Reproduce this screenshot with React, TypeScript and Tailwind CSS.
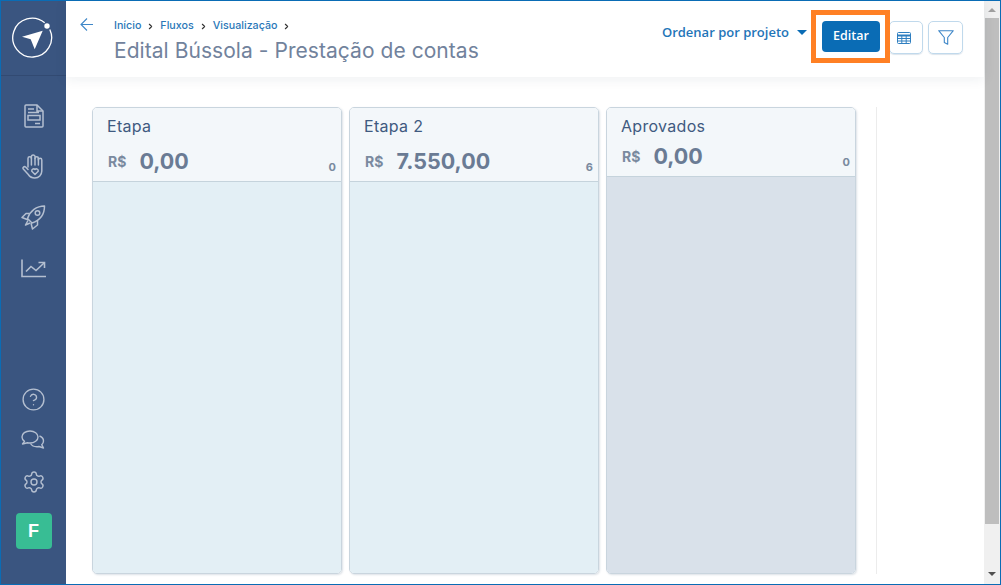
import React from 'react';
import { ChevronRight, CircleHelp, Settings } from 'lucide-react';

const heading = "font-['Inter','Noto_Sans',sans-serif]";

const columns = [
  { title: 'Etapa', total: '0,00', count: 0, body: 'bg-[#e3eff5]', headH: 'h-[74px]', totalTop: 'mt-[11px]' },
  { title: 'Etapa 2', total: '7.550,00', count: 6, body: 'bg-[#e3eff5]', headH: 'h-[74px]', totalTop: 'mt-[11px]' },
  { title: 'Aprovados', total: '0,00', count: 0, body: 'bg-[#d9e1ea]', headH: 'h-[69px]', totalTop: 'mt-[6px]' },
];

const Logo = () => (
  <svg width="42" height="42" viewBox="0 0 42 42" fill="none">
    <path d="M32.7 5.800A19.400 19.400 0 1 0 37.800 12.500" stroke="#fff" strokeWidth="1.300" />
    <circle cx="35" cy="9" r="2.700" fill="#fff" />
    <path d="M10 19.700 30.700 13.700 22.700 32.300 18.700 22.300Z" fill="#fff" />
  </svg>
);

const FormIcon = () => (
  <svg width="20" height="24" viewBox="0 0 20 24" fill="none" stroke="#b4bfd0" strokeWidth="1.500">
    <path d="M2 1h11l6 6v15a1 1 0 0 1-1 1H2a1 1 0 0 1-1-1V2a1 1 0 0 1 1-1Z" />
    <path d="M13 1v6h6M4 5h6M4 8.500h11" />
    <rect x="4" y="11.500" width="12" height="4.500" />
    <path d="M11 19.500h5" />
  </svg>
);

const HandIcon = () => (
  <svg width="23" height="25" viewBox="0 0 23 25" fill="none" stroke="#b4bfd0" strokeWidth="1.500" strokeLinejoin="round" strokeLinecap="round">
    <path d="M6 13V4.500a1.700 1.700 0 0 1 3.400 0V2.800a1.800 1.800 0 0 1 3.600 0v1.700a1.700 1.700 0 0 1 3.400 0v1.500a1.700 1.700 0 0 1 3.400 0v11c0 4-3 7-7 7-3.500 0-5-1.200-6.500-3.500L1.300 15c-1-1.500.8-3 2.300-2L6 15.500" />
    <path d="M9.400 4.500V11M13 4.500V11M16.400 4.500V11" />
    <path d="M13 20.500 9.800 17.300a1.900 1.900 0 0 1 3.200-1.800 1.900 1.900 0 0 1 3.200 1.800Z" />
  </svg>
);

const RocketIcon = () => (
  <svg width="25" height="25" viewBox="0 0 25 25" fill="none" stroke="#b4bfd0" strokeWidth="1.500" strokeLinejoin="round">
    <path d="M6.500 13.500C9 6 15.500 1 23.500 1 23.500 9.500 18.500 15.500 11 18Z" />
    <circle cx="16.500" cy="8" r="2.300" />
    <path d="M8.500 8.500H5L1 12.500l6.500 2.500" />
    <path d="M16.500 15.500V20l-5 4-1.500-6" />
    <path d="M7 15.500 4.500 20 9 18" />
  </svg>
);

const ChartIcon = () => (
  <svg width="26" height="20" viewBox="0 0 26 20" fill="none" stroke="#b4bfd0" strokeWidth="1.600">
    <path d="M1 1.500V18.500h24" />
    <path d="M5 13.500 10 8.500l5 4 8-7.500" />
    <path d="M17.500 4.500H23.500V10" />
  </svg>
);

const ChatIcon = () => (
  <svg width="25" height="19" viewBox="0 0 25 19" fill="none" stroke="#b4bfd0" strokeWidth="1.400" strokeLinejoin="round">
    <path d="M9 1C4.500 1 1 3.500 1 7c0 1.800 1 3.300 2.500 4.300L1.500 14l5-1.300c.8.2 1.600.3 2.500.3 4.500 0 8-2.600 8-6S13.500 1 9 1Z" />
    <path d="M18.500 6c2.500 1 4 2.800 4 5 0 1.500-.7 2.800-1.800 3.700L22.500 18 18 16.500c-.7.2-1.500.2-2.200.2-2.800 0-5.200-1.300-6.300-3.200" />
  </svg>
);

const TableIcon = () => (
  <svg width="14" height="12" viewBox="0 0 14 12" fill="none" stroke="#2f7fc0" strokeWidth="1">
    <rect x="0.500" y="0.500" width="13" height="11" rx="1" />
    <path d="M0.500 3.500h13" strokeWidth="2" />
    <path d="M0.500 6.500h13M0.500 9h13M4.800 3v8.500M9.200 3v8.500" />
  </svg>
);

const FunnelIcon = () => (
  <svg width="16" height="15" viewBox="0 0 16 15" fill="none" stroke="#3f87c8" strokeWidth="1.100" strokeLinejoin="round">
    <path d="M.7.700h14.600L9.700 7.500v6.800L6.300 12.600V7.500Z" />
  </svg>
);

const BackArrow = () => (
  <svg width="13" height="13" viewBox="0 0 13 13" fill="none" stroke="#3f87c8" strokeWidth="1.100" className="ml-[14px] mt-[17px] shrink-0">
    <path d="M13 6.500H1M7 .5 1 6.500l6 6" />
  </svg>
);

const Crumb = () => <ChevronRight size={9} strokeWidth={3} color="#333" className="mx-[5px]" />;

const SideIcon = ({ children, className }: { children: React.ReactNode; className: string }) => (
  <div className={`flex items-center justify-center ${className}`}>{children}</div>
);

export default function App() {
  return (
    <div className="relative flex h-[585px] w-[1001px] overflow-hidden border border-[#0a6cb5] bg-white font-['Open_Sans',sans-serif]">
      {/* Sidebar */}
      <aside className="flex w-[65px] shrink-0 flex-col bg-[#3a5580]">
        <div className="h-[75px] shrink-0 border-b border-[#324a72] pl-[11px] pt-[16px]">
          <Logo />
        </div>
        <div className="flex flex-1 flex-col items-center">
          <SideIcon className="mt-[28px] h-[24px]"><FormIcon /></SideIcon>
          <SideIcon className="mt-[26px] h-[25px]"><HandIcon /></SideIcon>
          <SideIcon className="mt-[26px] h-[25px]"><RocketIcon /></SideIcon>
          <SideIcon className="mt-[28px] h-[20px]"><ChartIcon /></SideIcon>
          <SideIcon className="mt-auto h-[24px]"><CircleHelp size={25} strokeWidth={1.300} color="#b4bfd0" /></SideIcon>
          <SideIcon className="mt-[19px] h-[19px]"><ChatIcon /></SideIcon>
          <SideIcon className="mt-[21px] h-[24px]"><Settings size={24} strokeWidth={1.400} color="#b4bfd0" /></SideIcon>
          <div className="mb-[35px] mt-[19px] flex h-9 w-9 items-center justify-center rounded bg-[#38bd94] font-['Liberation_Sans',sans-serif] text-lg font-bold text-white">
            F
          </div>
        </div>
      </aside>

      {/* Main */}
      <main className="flex min-w-0 flex-1 flex-col">
        <header className="z-10 flex h-[76px] shrink-0 items-start bg-white pr-[21px] shadow-[0_2px_12px_rgba(30,50,80,0.08)]">
          <BackArrow />
          <div className={`ml-[21px] mt-[18px] ${heading}`}>
            <nav className="flex items-center text-[10.700px] font-medium leading-[14px] text-[#2a77b8]">
              <span>Início</span>
              <Crumb />
              <span>Fluxos</span>
              <Crumb />
              <span>Visualização</span>
              <Crumb />
            </nav>
            <h1 className="mt-[4px] whitespace-nowrap text-[21px] font-normal leading-[28px] tracking-[0.05px] text-[#71829c]">
              Edital Bússola - Prestação de contas
            </h1>
          </div>
          <div className="ml-auto mt-[20px] flex items-start">
            <button className="mt-[2px] flex items-center gap-2 text-[13px] font-semibold leading-[18px] text-[#1f75b8]">
              Ordenar por projeto
              <span className="h-0 w-0 border-x-[5px] border-t-[5px] border-x-transparent border-t-[#0a6cb5]" />
            </button>
            <button className="ml-[15px] h-[31px] w-[58px] rounded-[4px] bg-[#0a6cb5] text-[12.500px] font-semibold text-white">
              Editar
            </button>
            <button className="ml-[9px] flex h-[33px] w-[34px] items-center justify-center rounded-[5px] border border-[#c0d9ec] pr-[4px] shadow-[0_1px_1px_rgba(30,80,130,0.15)]">
              <TableIcon />
            </button>
            <button className="ml-[5px] flex h-[33px] w-[35px] items-center justify-center rounded-[5px] border border-[#c0d9ec] shadow-[0_1px_1px_rgba(30,80,130,0.15)]">
              <FunnelIcon />
            </button>
          </div>
        </header>

        <div className="flex flex-1 items-start pl-[26px] pt-[30px]">
          <div className="flex gap-[7px]">
            {columns.map((col) => (
              <section
                key={col.title}
                className="flex h-[467px] w-[250px] flex-col overflow-hidden rounded-[5px] border border-[#c9d5de] shadow-[1px_1px_2px_rgba(60,90,120,0.18)]"
              >
                <div className={`relative shrink-0 border-b border-[#c5d3dc] bg-[#f3f7fa] ${col.headH} ${heading}`}>
                  <div className="ml-[14px] mt-[8px] text-[16px] leading-[20px] tracking-[0.3px] text-[#3f5a80]">{col.title}</div>
                  <div className={`ml-[15px] flex items-center gap-[13px] ${col.totalTop}`}>
                    <span className="text-[14px] font-bold text-[#7a8a9f]">R$</span>
                    <span className="text-[21.500px] font-bold leading-[28px] text-[#6a7b94]">{col.total}</span>
                  </div>
                  <span className="absolute bottom-[7px] right-[5px] text-[11px] font-bold leading-[14px] text-[#7a8a9f]">{col.count}</span>
                </div>
                <div className={`flex-1 ${col.body}`} />
              </section>
            ))}
          </div>
          <div className="ml-[20px] h-[467px] w-px bg-[#ececec]" />
        </div>
      </main>

      {/* Scrollbar */}
      <div className="flex w-[16px] shrink-0 flex-col items-center bg-[#f0f0f0]">
        <span className="mt-[7px] h-0 w-0 border-x-[4px] border-b-[4px] border-x-transparent border-b-[#a0a0a0]" />
        <div className="mt-[6px] h-[506px] w-[14px] bg-[#bebebe]" />
        <span className="mt-[48px] h-0 w-0 border-x-[4px] border-t-[4px] border-x-transparent border-t-[#505050]" />
      </div>

      {/* Annotation drawn over the screenshot */}
      <div className="pointer-events-none absolute left-[810px] top-[9px] z-20 h-[53px] w-[79px] border-[5px] border-[#ff8024]" />
    </div>
  );
}
